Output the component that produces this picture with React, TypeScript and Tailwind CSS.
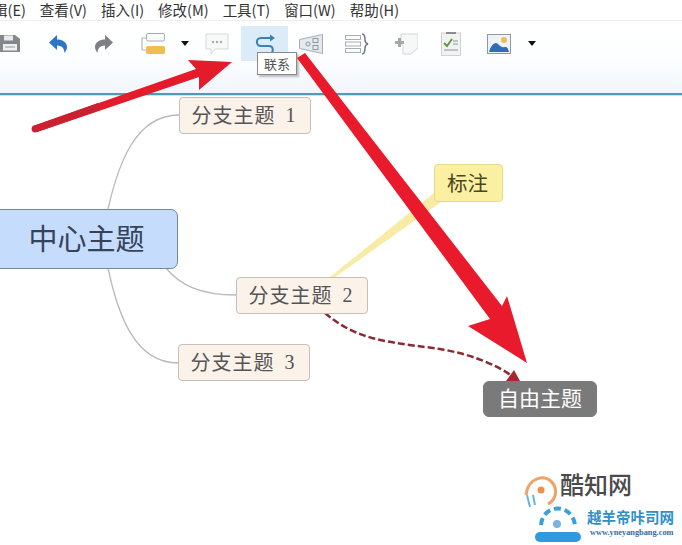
const cjk = "font-['Noto_Sans_CJK_SC','Noto_Sans',sans-serif]";

const menus = ['辑(E)', '查看(V)', '插入(I)', '修改(M)', '工具(T)', '窗口(W)', '帮助(H)'];

function Caret({ className }: { className: string }) {
  return (
    <svg className={className} width="8" height="5" viewBox="0 0 8 5">
      <path d="M0 0H8L4 5Z" fill="#111" />
    </svg>
  );
}

function Toolbar() {
  return (
    <div className="flex h-[72px] items-start bg-gradient-to-b from-white via-[#fdfeff] to-[#f0f6fb] pt-[5px]">
      <div className="flex h-[35px] items-center">
        {/* 保存 */}
        <svg width="20" height="19" viewBox="0 0 20 19">
          <path d="M0 1H15L20 5V18H0Z" fill="#85888a" />
          <rect x="4" y="1.500" width="9" height="5" fill="#e8eaec" />
          <rect x="3" y="10" width="14" height="6.500" fill="#eef0f2" />
          <rect x="5" y="12.500" width="10" height="1" fill="#9a9a9a" />
        </svg>
        {/* 撤销 */}
        <svg className="ml-[29px]" width="18" height="18" viewBox="0 0 18 18">
          <path d="M8 0V4.500C13 4.500 18 7 18 12C18 14 17 16 15.500 18C15.500 13.500 13 10.500 8 10.500V15L0 7.500Z" fill="#2b74c6" />
        </svg>
        {/* 重做 */}
        <svg className="ml-[28px]" width="18" height="18" viewBox="0 0 18 18">
          <path d="M10 0V4.500C5 4.500 0 7 0 12C0 14 1 16 2.500 18C2.500 13.500 5 10.500 10 10.500V15L18 7.500Z" fill="#7b8083" />
        </svg>
        {/* 主题 */}
        <svg className="ml-[28px]" width="24" height="21" viewBox="0 0 24 21">
          <path d="M6 5H1V17H6" fill="none" stroke="#b3b6b8" strokeWidth="1.200" />
          <rect x="5.500" y="0.500" width="18" height="7.500" rx="1.500" fill="#fbfbfb" stroke="#a9acae" />
          <rect x="5" y="13" width="19" height="8" rx="1.500" fill="#eebf50" />
        </svg>
        <Caret className="ml-[16px]" />
        {/* 备注 */}
        <svg className="ml-[16px]" width="24" height="22" viewBox="0 0 24 22">
          <path d="M1 1H23V16H10L6 21V16H1Z" fill="#f7f8f8" stroke="#d6d8d9" />
          <circle cx="8" cy="9" r="1.200" fill="#a8abad" />
          <circle cx="12" cy="9" r="1.200" fill="#a8abad" />
          <circle cx="16" cy="9" r="1.200" fill="#a8abad" />
        </svg>
        {/* 联系 */}
        <div className="ml-[12px] flex h-[35px] w-[47px] justify-center bg-[#dcebf8] pt-[8px]">
          <svg width="22" height="22" viewBox="0 0 22 22">
            <path
              d="M18 4H7C1.500 4 1.500 12 7 12H15C20 12 20 20 15 20H4"
              fill="none"
              stroke="#3a7fb8"
              strokeWidth="2"
            />
            <path d="M16 0.500V7.500L21 4Z" fill="#3a7fb8" />
          </svg>
        </div>
        {/* 外框 */}
        <svg className="ml-[11px]" width="24" height="20" viewBox="0 0 24 20">
          <path d="M0.500 5.500L23.500 0.500V19.500L0.500 14.500Z" fill="#e4e9ed" stroke="#a5aeb5" />
          <circle cx="9" cy="10" r="2" fill="none" stroke="#8f99a1" />
          <rect x="14" y="4.500" width="5" height="4" fill="none" stroke="#8f99a1" />
          <rect x="14" y="11.500" width="5" height="4" fill="none" stroke="#8f99a1" />
        </svg>
        {/* 概要 */}
        <svg className="ml-[22px]" width="24" height="22" viewBox="0 0 24 22">
          <g fill="#fafbfb" stroke="#a9aeb2">
            <rect x="0.500" y="2.500" width="15" height="4" />
            <rect x="0.500" y="9" width="15" height="4" />
            <rect x="0.500" y="15.500" width="15" height="4" />
          </g>
          <path
            d="M17 1C20 1 20 4 20 7C20 9 21 10.500 23 11C21 11.500 20 13 20 15C20 18 20 21 17 21"
            fill="none"
            stroke="#6d7a8a"
            strokeWidth="1.500"
          />
        </svg>
        {/* 标注 */}
        <svg className="ml-[26px]" width="23" height="22" viewBox="0 0 23 22">
          <path d="M6 1H23V15L16 21H8V12H6Z" fill="#f6f7f7" stroke="#d3d5d6" />
          <path d="M0 8H3V5H6V8H9V11H6V14H3V11H0Z" fill="#a4a8ab" />
        </svg>
        {/* 任务 */}
        <svg className="ml-[23px]" width="20" height="24" viewBox="0 0 20 24">
          <rect x="0.500" y="1" width="19" height="22.500" fill="#f1f2f2" stroke="#cfd2d3" />
          <rect x="5" y="0" width="10" height="2" fill="#8b8e90" />
          <path d="M3 11L6 14L11 7" fill="none" stroke="#5f9440" strokeWidth="1.800" />
          <path d="M12 9H17M12 12H17M3 18H17" stroke="#8f9395" strokeWidth="1.200" />
        </svg>
        {/* 图片 */}
        <svg className="ml-[26px]" width="24" height="20" viewBox="0 0 24 20">
          <rect x="0.500" y="0.500" width="23" height="19" fill="#eef3f8" stroke="#8d99a4" />
          <circle cx="17" cy="6" r="3" fill="#efbd55" />
          <path d="M2 18C4 11 8 7 11 10C13 12 15 14 18 13C20 12.500 21 14 22 18Z" fill="#2f6db8" />
        </svg>
        <Caret className="ml-[17px]" />
      </div>
    </div>
  );
}

function Node({ className, children }: { className: string; children: React.ReactNode }) {
  return (
    <div className={`absolute flex items-center justify-center border ${cjk} ${className}`}>{children}</div>
  );
}

function Branch({ className, n }: { className: string; n: number }) {
  return (
    <Node className={`h-[37px] w-[132px] rounded-[4px] border-[#c6bfb6] bg-[#fbf2ea] pb-[2px] pr-[3px] text-[20px] text-[#555] ${className}`}>
      <span className="tracking-[1px]">分支主题</span>
      <span className="ml-[10px] font-['Liberation_Serif',serif]">{n}</span>
    </Node>
  );
}

export default function App() {
  return (
    <div className={`relative flex h-[545px] w-[682px] flex-col overflow-hidden bg-white ${cjk}`}>
      {/* 菜单栏 */}
      <div className="flex h-[21px] items-center gap-[14px] border-b border-[#f0f0f0] text-[14.500px] text-[#333]">
        {menus.map((m, i) => (
          <span key={m} className={i === 0 ? 'ml-[-7px]' : ''}>
            {m}
          </span>
        ))}
      </div>
      <Toolbar />
      <div className="h-[3px] border-b border-[#c5e6ee] bg-[#4b9db4]" />

      {/* 画布 */}
      <div className="relative flex-1 overflow-hidden">
        <svg className="absolute inset-0" width="682" height="449" viewBox="0 96 682 449">
          <g fill="none" stroke="#b9b9b9" strokeWidth="1.300">
            <path d="M108 209C118 165 135 115 179 115" />
            <path d="M108 268C118 315 135 363 178 363" />
            <path d="M166 268C180 285 200 295 236 295" />
          </g>
          <path d="M434 193L441 202L335 277H330Z" fill="#f7eba6" />
          <path
            d="M325 313C340 326 355 333 372 338C395 344 420 346 440 349C470 354 495 364 512 376"
            fill="none"
            stroke="#8a2b34"
            strokeWidth="2.500"
            strokeDasharray="7 3"
          />
          <path d="M506 381L514 370L520 381Z" fill="#a3282f" />
        </svg>

        <Branch className="left-[179px] top-[1px]" n={1} />
        <Branch className="left-[236px] top-[181px]" n={2} />
        <Branch className="left-[178px] top-[248px]" n={3} />

        <Node className="left-[-12px] top-[113px] h-[60px] w-[190px] rounded-[7px] border-[#74889f] bg-[#c6dcfc] pb-[2px] pl-[7px] text-[29px] text-[#35445b]">
          中心主题
        </Node>
        <Node className="left-[434px] top-[68px] h-[38px] w-[69px] rounded-[4px] border-[#e6da8c] bg-[#fbf0a2] pb-[2px] pr-[2px] text-[20.500px] text-[#4b4622]">
          标注
        </Node>
        <Node className="left-[483px] top-[285px] h-[36px] w-[114px] rounded-[6px] border-[#7a7a7a] bg-[#7a7a7a] pb-[2px] text-[21px] text-white">
          自由主题
        </Node>

        {/* 水印 */}
        <svg className="absolute left-[520px] top-[375px]" width="62" height="74" viewBox="0 0 62 74">
          <path d="M6 24C8 5 28 2 34 14C38 22 34 30 28 33" fill="none" stroke="#eda36a" strokeWidth="3" />
          <circle cx="21" cy="19" r="3.500" fill="#e8934e" />
          <path d="M7 24L10 36M13 24L15 34" stroke="#6bb4de" strokeWidth="2" />
          <path d="M21 54C23 32 52 32 55 54" fill="none" stroke="#3aa0dc" strokeWidth="4" strokeDasharray="7 4" />
          <circle cx="37" cy="53" r="4" fill="#7fb2dc" />
          <rect x="15" y="61" width="46" height="10" rx="5" fill="#2f9ae0" />
        </svg>
        <div className="absolute left-[560px] top-[372px] text-[24px] font-medium leading-[32px] text-[#4a4a4a]">酷知网</div>
        <div className="absolute left-[587px] top-[412px] text-[14.500px] font-bold leading-[18px] text-[#2f8fc9]">
          越羊帝咔司网
        </div>
        <div className="absolute left-[590px] top-[431px] font-['Liberation_Serif',serif] text-[8.300px] font-bold leading-[12px] text-[#3a6b99]">
          www.yneyangbang.com
        </div>
      </div>

      {/* 提示 */}
      <div className="absolute left-[257px] top-[52px] flex h-[23px] w-[40px] items-center justify-center border border-[#8a8a8a] bg-white text-[13px] text-[#555] shadow-[2px_2px_2px_rgba(0,0,0,0.25)]">
        联系
      </div>

      {/* 红色箭头 */}
      <svg className="absolute inset-0" width="682" height="545" viewBox="0 0 682 545">
        <path d="M33 126L37 132L199 77L199 90L232 62L188 60L196 69Z" fill="#e31b2b" />
        <path d="M33 126L37 132L100 110L98 103Z" fill="#cb2030" />
        <circle cx="35" cy="129" r="3.400" fill="#cb2030" />
        <path d="M297 58L305 53L502 306L507 296L527 363L468 326L490 319Z" fill="#e81a2b" />
      </svg>
    </div>
  );
}
